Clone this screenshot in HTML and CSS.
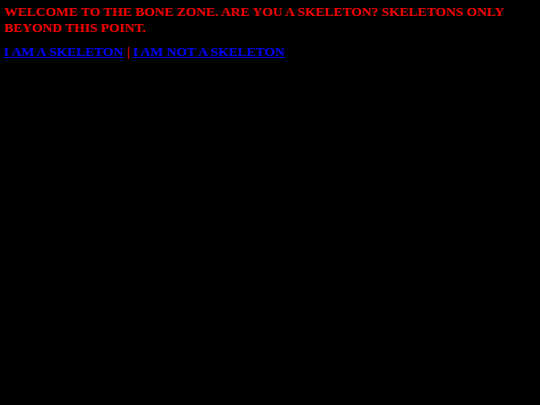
FILE: index.html
```html
<!DOCTYPE html>
<html>
<head>
<meta charset="utf-8">
<link rel="stylesheet" href="styles.css">
</head>
<body class="page">
<p class="welcome">WELCOME TO THE BONE ZONE. ARE YOU A SKELETON? SKELETONS ONLY BEYOND THIS POINT.</p>
<p class="choices"><a class="choice" href="#">I AM A SKELETON</a> | <a class="choice" href="#">I AM NOT A SKELETON</a></p>
</body>
</html>
```
FILE: styles.css
```css
html { background: #000; }
.page {
  margin: 4px;
  background: #000;
  color: #e00;
  font-family: "Liberation Serif", serif;
  font-weight: bold;
  font-size: 13.5px;
  line-height: 16px;
}
.welcome { margin: 0; }
.choices { margin: 8px 0 0; }
.choice { color: #0000ee; }
```
